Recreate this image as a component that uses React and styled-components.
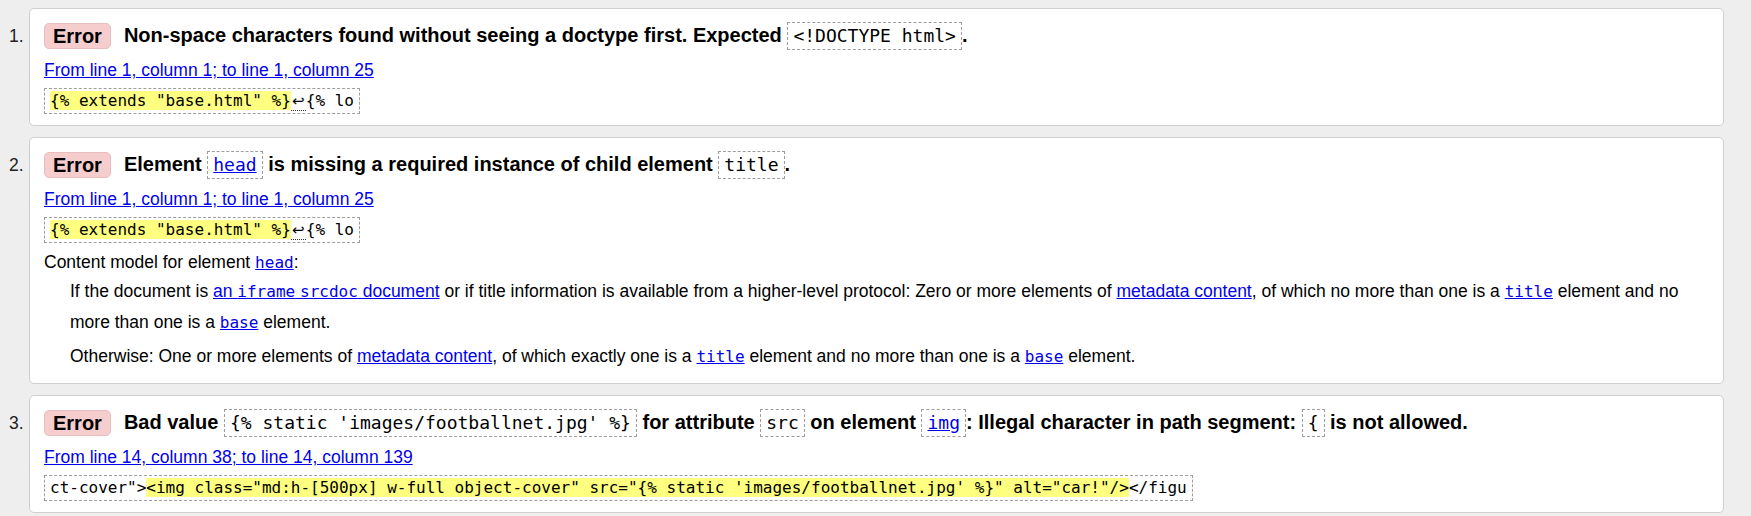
import React from "react";
import styled, { createGlobalStyle } from "styled-components";

const GlobalStyle = createGlobalStyle`
  body {
    margin: 0;
    background: #eeeeee;
    font-family: "Liberation Sans", Arial, sans-serif;
    font-size: 17.5px;
    color: #000;
  }
`;

const List = styled.ol`
  list-style: none;
  margin: 0;
  padding: 8px 27px 4px 9px;
  display: flex;
  flex-direction: column;
  gap: 11px;
`;

const Item = styled.li`
  display: flex;
  align-items: flex-start;
`;

const Number = styled.span`
  width: 20px;
  flex: none;
  margin-top: 13px;
  line-height: 30px;
  color: #222;
`;

const Card = styled.div`
  flex: 1;
  background: #fff;
  border: 1px solid #cfcfcf;
  border-radius: 5px;
  padding: 12px 14px 11px 14px;
`;

const TitleRow = styled.div`
  display: flex;
  align-items: center;
  gap: 13px;
  height: 30px;
`;

const Badge = styled.span`
  flex: none;
  font-weight: bold;
  font-size: 20px;
  line-height: 24px;
  padding: 0 8px;
  background: #f6cdcd;
  border: 1px solid #e9bdbd;
  border-radius: 5px;
`;

const Title = styled.span`
  font-weight: bold;
  font-size: 20px;
  line-height: 26px;
  white-space: nowrap;
`;

const Code = styled.code`
  display: inline-block;
  vertical-align: middle;
  font-family: "DejaVu Sans Mono", "Liberation Mono", monospace;
  font-weight: normal;
  font-size: 18px;
  line-height: 26px;
  padding: 0 5px;
  border: 1px dashed #9e9e9e;
`;

const Link = styled.a`
  color: #0000ee;
  text-decoration: underline;
  cursor: pointer;
`;

const Mono = styled.code`
  font-family: "DejaVu Sans Mono", "Liberation Mono", monospace;
  font-size: 16px;
`;

const Location = styled.p`
  margin: 7px 0 0;
  line-height: 24px;
`;

const ExtractRow = styled.div`
  display: flex;
  margin-top: 6px;
`;

const Extract = styled.code`
  font-family: "DejaVu Sans Mono", "Liberation Mono", monospace;
  font-size: 16px;
  line-height: 24px;
  padding: 0 5px;
  border: 1px dashed #9e9e9e;
  white-space: pre;
`;

const Highlight = styled.span`
  background: #ffff80;
`;

const Lf = styled.span`
  display: inline-block;
  width: 15px;
  line-height: 18px;
  font-family: "DejaVu Sans", sans-serif;
  font-size: 15px;
  text-align: center;
  border-bottom: 1px dotted #333;
`;

const Model = styled.dl`
  margin: 7px 0 0;
`;

const ModelHead = styled.dt`
  line-height: 24px;
`;

const ModelBody = styled.dd`
  margin: ${({ first }) => (first ? "1px" : "3px")} 0 0 26px;
  line-height: 31px;
`;

const DocExtract = () => (
  <Extract>
    <Highlight>{'{% extends "base.html" %}'}</Highlight>
    <Lf>↩</Lf>
    {"{% lo"}
  </Extract>
);

const Message = ({ n, children, location, extract, model }) => (
  <Item>
    <Number>{n}.</Number>
    <Card>
      <TitleRow>
        <Badge>Error</Badge>
        <Title>{children}</Title>
      </TitleRow>
      <Location>
        <Link>{location}</Link>
      </Location>
      <ExtractRow>{extract}</ExtractRow>
      {model}
    </Card>
  </Item>
);

export default function App() {
  return (
    <>
      <GlobalStyle />
      <List>
        <Message
          n={1}
          location="From line 1, column 1; to line 1, column 25"
          extract={<DocExtract />}
        >
          Non-space characters found without seeing a doctype first. Expected{" "}
          <Code>{"<!DOCTYPE html>"}</Code>.
        </Message>
        <Message
          n={2}
          location="From line 1, column 1; to line 1, column 25"
          extract={<DocExtract />}
          model={
            <Model>
              <ModelHead>
                Content model for element{" "}
                <Link>
                  <Mono>head</Mono>
                </Link>
                :
              </ModelHead>
              <ModelBody first>
                If the document is{" "}
                <Link>
                  an <Mono>iframe</Mono> <Mono>srcdoc</Mono> document
                </Link>{" "}
                or if title information is available from a higher-level
                protocol: Zero or more elements of <Link>metadata content</Link>
                , of which no more than one is a{" "}
                <Link>
                  <Mono>title</Mono>
                </Link>{" "}
                element and no more than one is a{" "}
                <Link>
                  <Mono>base</Mono>
                </Link>{" "}
                element.
              </ModelBody>
              <ModelBody>
                Otherwise: One or more elements of{" "}
                <Link>metadata content</Link>, of which exactly one is a{" "}
                <Link>
                  <Mono>title</Mono>
                </Link>{" "}
                element and no more than one is a{" "}
                <Link>
                  <Mono>base</Mono>
                </Link>{" "}
                element.
              </ModelBody>
            </Model>
          }
        >
          Element{" "}
          <Code>
            <Link>head</Link>
          </Code>{" "}
          is missing a required instance of child element <Code>title</Code>.
        </Message>
        <Message
          n={3}
          location="From line 14, column 38; to line 14, column 139"
          extract={
            <Extract>
              {'ct-cover">'}
              <Highlight>
                {
                  '<img class="md:h-[500px] w-full object-cover" src="{% static \'images/footballnet.jpg\' %}" alt="car!"/>'
                }
              </Highlight>
              {"</figu"}
            </Extract>
          }
        >
          Bad value <Code>{"{% static 'images/footballnet.jpg' %}"}</Code> for
          attribute <Code>src</Code> on element{" "}
          <Code>
            <Link>img</Link>
          </Code>
          : Illegal character in path segment: <Code>{"{"}</Code> is not
          allowed.
        </Message>
      </List>
    </>
  );
}
